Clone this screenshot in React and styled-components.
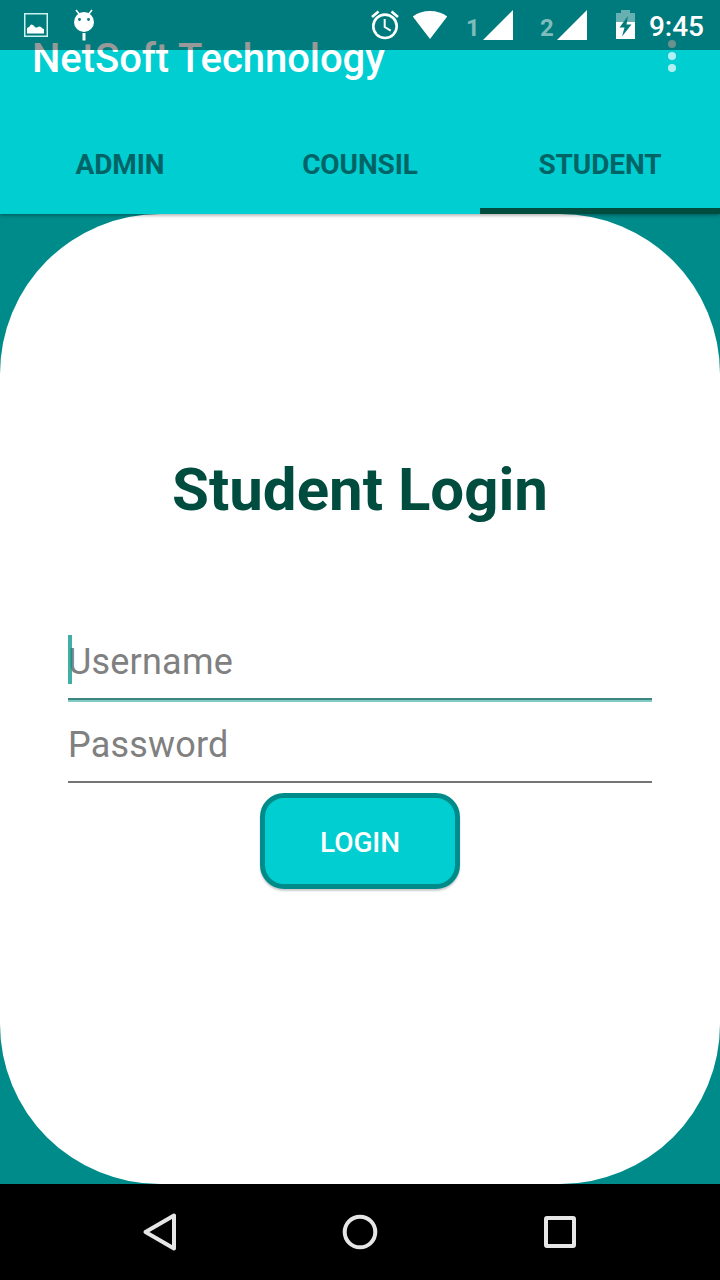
import React from "react";
import styled, { createGlobalStyle } from "styled-components";

const GlobalStyle = createGlobalStyle`
    * {
        box-sizing: border-box;
    }

    body {
        margin: 0;
        font-family: Roboto, sans-serif;
    }
`;

const Screen = styled.div`
    position: relative;
    display: flex;
    flex-direction: column;
    width: 720px;
    height: 1280px;
    overflow: hidden;
    background: #008b8b;
`;

const StatusBar = styled.div`
    position: absolute;
    top: 0;
    left: 0;
    z-index: 2;
    display: flex;
    justify-content: space-between;
    width: 100%;
    height: 50px;
    padding: 0 16px 0 24px;
    background: rgba(0, 0, 0, 0.4);
`;

const StatusGroup = styled.div`
    display: flex;
    align-items: flex-start;
`;

const StatusIcon = styled.svg`
    display: block;
    flex: none;
    margin-left: ${props => props.$gap || 0}px;
`;

const SimNumber = styled.span`
    width: 14px;
    margin: 13px 0 0 ${props => props.$gap}px;
    color: #7fbdbc;
    font-size: 24px;
    font-weight: 700;
    line-height: 30px;
`;

const Clock = styled.span`
    margin: 11px 0 0 13px;
    color: white;
    font-size: 28px;
    font-weight: 500;
    line-height: 31px;
`;

const Header = styled.header`
    position: relative;
    z-index: 1;
    height: 214px;
    background: #00ced1;
    box-shadow: 0 1px 4px rgba(0, 0, 0, 0.4);
`;

const Toolbar = styled.div`
    display: flex;
    align-items: center;
    justify-content: space-between;
    height: 116px;
    padding: 0 44px 0 32px;
`;

const AppTitle = styled.h1`
    margin: 2px 0 0;
    color: white;
    font-size: 40px;
    font-weight: 500;
    letter-spacing: -0.05px;
    line-height: 48px;
`;

const MenuDots = styled.div`
    display: flex;
    flex-direction: column;
    gap: 4px;
    margin-bottom: 4px;
`;

const Dot = styled.span`
    width: 8px;
    height: 8px;
    border-radius: 50%;
    background: rgba(255, 255, 255, 0.7);
`;

const Tabs = styled.nav`
    display: flex;
    height: 98px;
`;

const Tab = styled.div`
    flex: 1;
    padding-top: 5px;
    border-bottom: 6px solid ${props => props.$active ? "#004d40" : "transparent"};
    color: #006467;
    font-size: 28px;
    font-weight: 700;
    letter-spacing: -0.1px;
    line-height: 87px;
    text-align: center;
`;

const Card = styled.main`
    display: flex;
    flex-direction: column;
    align-items: center;
    height: 970px;
    padding: 241px 68px 0;
    border-radius: 160px;
    background: white;
`;

const Heading = styled.h2`
    margin: 0 0 96px;
    color: #004d40;
    font-size: 60px;
    font-weight: 700;
    line-height: 70px;
`;

const Field = styled.div`
    position: relative;
    width: 100%;
    height: ${props => props.$focused ? 77 : 79}px;
    color: #808080;
    font-size: 36px;
    letter-spacing: 0.2px;
    line-height: ${props => props.$focused ? 83 : 86}px;
`;

const Underline = styled.div`
    width: 100%;
    height: ${props => props.$focused ? 4 : 2}px;
    border-top: 2px solid ${props => props.$focused ? "#3d8580" : "#757575"};
    background: #80cbc4;
`;

const Caret = styled.span`
    position: absolute;
    top: 14px;
    left: 0;
    width: 4px;
    height: 49px;
    background: rgba(0, 150, 136, 0.75);
`;

const LoginButton = styled.button`
    width: 200px;
    height: 96px;
    margin-top: 10px;
    padding: 3px 0 0;
    border: 5px solid #008b8b;
    border-radius: 24px;
    background: #00ced1;
    box-shadow: 0 2px 2px rgba(0, 0, 0, 0.2);
    color: white;
    font-family: inherit;
    font-size: 28px;
    font-weight: 500;
    letter-spacing: -0.1px;
`;

const NavBar = styled.footer`
    display: flex;
    align-items: center;
    justify-content: space-between;
    height: 96px;
    padding: 0 140px;
    background: black;
`;

const NavIcon = styled.svg`
    display: block;
    fill: none;
    stroke: #e6e6e6;
    stroke-width: 4;
    stroke-linejoin: round;
`;

const tabs = ["ADMIN", "COUNSIL", "STUDENT"];

const Signal = () => (
    <StatusIcon width="30" height="50" $gap={3}>
        <path d="M30 10v30H0z" fill="white" />
    </StatusIcon>
);

const App = () => {
    return(
        <Screen>
            <GlobalStyle />
            <StatusBar>
                <StatusGroup>
                    <StatusIcon width="24" height="50">
                        <rect x="0.75" y="13.75" width="22.5" height="22.5" fill="none" stroke="#c9f3ef" strokeWidth="1.5" />
                        <path d="M3 33.5V28l2-1 2-2.5 2 .5 2.5 2.5h1.5l2-1 2 .5 1.5 1.5 1.5.5v4.5z" fill="white" />
                    </StatusIcon>
                    <StatusIcon width="24" height="50" $gap={24}>
                        <circle cx="12" cy="22" r="10" fill="white" />
                        <path d="M4 10l4 5M20 10l-4 5" stroke="white" strokeWidth="1.6" />
                        <path d="M12 33v7.5" stroke="white" strokeWidth="3" />
                        <circle cx="7.5" cy="19.5" r="1.4" fill="#007c7d" />
                        <circle cx="16.5" cy="19.5" r="1.4" fill="#007c7d" />
                    </StatusIcon>
                </StatusGroup>
                <StatusGroup>
                    <StatusIcon width="28" height="50">
                        <g fill="none" stroke="white">
                            <circle cx="14" cy="26.3" r="11.7" strokeWidth="2.6" />
                            <path d="M13.7 19v8l6 3.7" strokeWidth="2" />
                            <path d="M1 17l6.5-5.5M27 17l-6.5-5.5" strokeWidth="2.6" />
                        </g>
                    </StatusIcon>
                    <StatusIcon width="36" height="50" $gap={13}>
                        <path d="M18 39L0.8 16.5Q8 11 18 11t17.2 5.5z" fill="white" />
                    </StatusIcon>
                    <SimNumber $gap={18}>1</SimNumber>
                    <Signal />
                    <SimNumber $gap={27}>2</SimNumber>
                    <Signal />
                    <StatusIcon width="20" height="50" $gap={29}>
                        <path d="M0 22v-9h5v-3h9v3h5v9z" fill="#66b0b1" />
                        <path d="M0 22h19v17H0z" fill="white" />
                        <path d="M12 16L3.5 27.5h5L6 36.5l9.5-12h-5z" fill="#007c7d" />
                    </StatusIcon>
                    <Clock>9:45</Clock>
                </StatusGroup>
            </StatusBar>
            <Header>
                <Toolbar>
                    <AppTitle>NetSoft Technology</AppTitle>
                    <MenuDots>
                        <Dot />
                        <Dot />
                        <Dot />
                    </MenuDots>
                </Toolbar>
                <Tabs>
                    {tabs.map(tab => (
                        <Tab key={tab} $active={tab === "STUDENT"}>{tab}</Tab>
                    ))}
                </Tabs>
            </Header>
            <Card>
                <Heading>Student Login</Heading>
                <Field $focused>
                    Username
                    <Caret />
                </Field>
                <Underline $focused />
                <Field>Password</Field>
                <Underline />
                <LoginButton>LOGIN</LoginButton>
            </Card>
            <NavBar>
                <NavIcon width="40" height="40">
                    <path d="M34 3.5v33L5.5 20z" />
                </NavIcon>
                <NavIcon width="40" height="40">
                    <circle cx="20" cy="20" r="15.3" />
                </NavIcon>
                <NavIcon width="40" height="40">
                    <rect x="6" y="6" width="28" height="28" rx="1" />
                </NavIcon>
            </NavBar>
        </Screen>
    )
}

export default App;
